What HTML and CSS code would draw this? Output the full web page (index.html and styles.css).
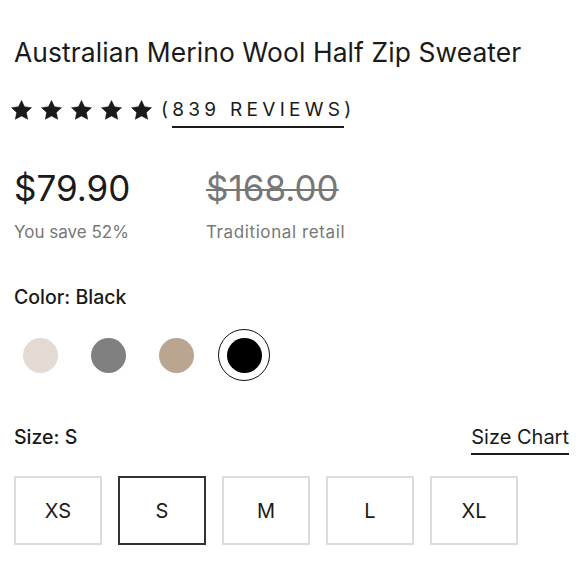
FILE: index.html
```html
<!DOCTYPE html>
<html>
<head>
<meta charset="utf-8">
<link rel="stylesheet" href="styles.css">
</head>
<body>
<div class="page">
  <h1 class="title">Australian Merino Wool Half Zip Sweater</h1>
  <div class="rating">
    <div class="stars">
      <svg class="star" viewBox="0 0 24 23"><path d="M12 .5l3.5 7.3 8 1-5.9 5.5 1.5 7.9L12 18.3l-7.1 3.9 1.5-7.9L.5 8.8l8-1z"/></svg>
      <svg class="star" viewBox="0 0 24 23"><path d="M12 .5l3.5 7.3 8 1-5.9 5.5 1.5 7.9L12 18.3l-7.1 3.9 1.5-7.9L.5 8.8l8-1z"/></svg>
      <svg class="star" viewBox="0 0 24 23"><path d="M12 .5l3.5 7.3 8 1-5.9 5.5 1.5 7.9L12 18.3l-7.1 3.9 1.5-7.9L.5 8.8l8-1z"/></svg>
      <svg class="star" viewBox="0 0 24 23"><path d="M12 .5l3.5 7.3 8 1-5.9 5.5 1.5 7.9L12 18.3l-7.1 3.9 1.5-7.9L.5 8.8l8-1z"/></svg>
      <svg class="star" viewBox="0 0 24 23"><path d="M12 .5l3.5 7.3 8 1-5.9 5.5 1.5 7.9L12 18.3l-7.1 3.9 1.5-7.9L.5 8.8l8-1z"/></svg>
    </div>
    <span class="reviews">(<span class="reviews-link">839 REVIEWS</span>)</span>
  </div>
  <div class="prices">
    <div class="price-col">
      <div class="price">$79.90</div>
      <div class="price-note">You save 52%</div>
    </div>
    <div class="price-col">
      <div class="price old">$168.00</div>
      <div class="price-note">Traditional retail</div>
    </div>
  </div>
  <div class="label">Color: Black</div>
  <div class="swatches">
    <div class="swatch"><span class="dot cream"></span></div>
    <div class="swatch"><span class="dot grey"></span></div>
    <div class="swatch"><span class="dot tan"></span></div>
    <div class="swatch selected"><span class="dot black"></span></div>
  </div>
  <div class="size-head">
    <div class="label">Size: S</div>
    <a class="size-chart">Size Chart</a>
  </div>
  <div class="sizes">
    <div class="size">XS</div>
    <div class="size active">S</div>
    <div class="size">M</div>
    <div class="size">L</div>
    <div class="size">XL</div>
  </div>
</div>
</body>
</html>
```
FILE: styles.css
```css
html, body { margin: 0; padding: 0; background: #fff; }
body { font-family: Inter, "Liberation Sans", sans-serif; color: #1a1a1a; }
.page { padding: 36px 10px 0 14px; }
.title { font-size: 26.4px; line-height: 32px; font-weight: 400; margin: 0; letter-spacing: 0.1px; }
.rating { display: flex; align-items: center; margin-top: 30px; height: 24px; }
.stars { display: flex; gap: 9px; margin-left: -3px; }
.star { width: 21px; height: 20px; fill: #1a1a1a; stroke: #1a1a1a; stroke-width: 0.6; stroke-linejoin: round; display: block; }
.reviews { font-size: 19px; letter-spacing: 4.3px; margin-left: 9px; line-height: 24px; }
.reviews-link { border-bottom: 2px solid #1a1a1a; padding-bottom: 5px; }
.prices { display: grid; grid-template-columns: 192px auto; margin-top: 46px; }
.price { font-size: 35px; line-height: 40px; }
.price.old { color: #777; text-decoration: line-through; text-decoration-thickness: 2px; }
.price-note { font-size: 17px; color: #777; margin-top: 13px; line-height: 22px; }
.price-col + .price-col .price-note { letter-spacing: 0.6px; }
.label { font-size: 19.5px; font-weight: 500; line-height: 24px; }
.prices + .label { margin-top: 42px; }
.swatches { display: flex; gap: 16px; margin-top: 20px; }
.swatch { width: 52px; height: 52px; border-radius: 50%; display: flex; align-items: center; justify-content: center; box-sizing: border-box; }
.swatch.selected { border: 1.5px solid #111; }
.dot { width: 35px; height: 35px; border-radius: 50%; display: block; }
.cream { background: #e3dbd3; }
.grey { background: #808080; }
.tan { background: #b9a590; }
.black { background: #000; }
.size-head { display: flex; justify-content: space-between; align-items: center; margin-top: 38px; }
.size-chart { font-size: 20px; line-height: 24px; padding-bottom: 4px; border-bottom: 2px solid #1a1a1a; color: #1a1a1a; margin-top: 6px; margin-right: 1px; }
.sizes { display: flex; gap: 16px; margin-top: 21px; }
.size { width: 88px; height: 69px; box-sizing: border-box; border: 2px solid #dcdcdc; display: flex; align-items: center; justify-content: center; font-size: 20px; }
.size.active { border-color: #333; }
```
